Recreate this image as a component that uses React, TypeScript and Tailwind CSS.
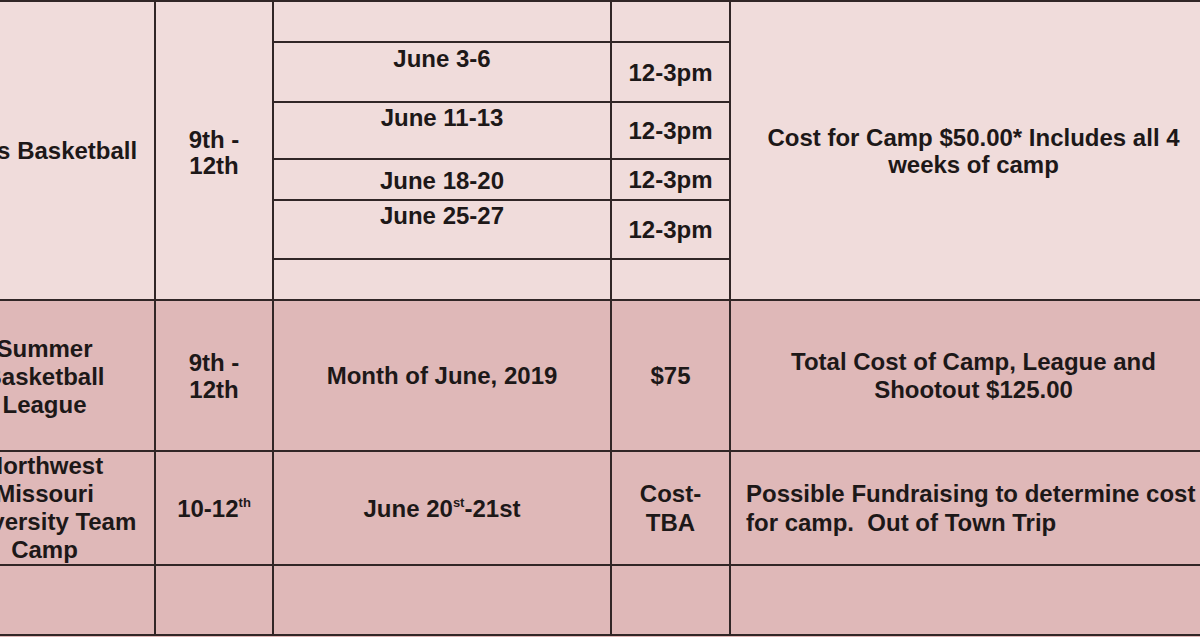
import React from "react";

const B = "border-[#312626]";

function Sub({
  h,
  date,
  time,
  pt,
  last,
}: {
  h: string;
  date?: React.ReactNode;
  time?: React.ReactNode;
  pt: string;
  last?: boolean;
}) {
  return (
    <div className={`flex ${h} ${last ? "" : "border-b-2"} ${B}`}>
      <div className={`w-[338px] border-r-2 ${B} text-center ${pt}`}>{date}</div>
      <div className="flex-1 flex items-center justify-center text-center">{time}</div>
    </div>
  );
}

export default function App() {
  return (
    <div className="w-[1200px] h-[637px] overflow-hidden bg-[#dfb8b8] font-['Liberation_Sans',Arial,sans-serif] font-bold text-[24px] leading-[27px] text-[#1d1818]">
      <div className={`ml-[-65px] w-[1281px] border-t-2 ${B}`}>
        {/* Row 1 */}
        <div className={`flex h-[299px] border-b-2 ${B} bg-[#f0dcdb]`}>
          <div className={`w-[221px] border-r-2 ${B} flex items-center justify-center text-center`}>
            Boys Basketball
          </div>
          <div className={`w-[118px] border-r-2 ${B} flex items-center justify-center text-center leading-[26px] pt-[4px]`}>
            9th -<br />12th
          </div>
          <div className={`w-[457px] border-r-2 ${B} flex flex-col`}>
            <Sub h="h-[41px]" pt="" />
            <Sub h="h-[60px]" pt="pt-[2px]" date="June 3-6" time="12-3pm" />
            <Sub h="h-[57px]" pt="pt-[1px]" date="June 11-13" time="12-3pm" />
            <Sub h="h-[41px]" pt="pt-[7px]" date="June 18-20" time="12-3pm" />
            <Sub h="h-[59px]" pt="pt-[1px]" date="June 25-27" time="12-3pm" />
            <Sub h="flex-1" pt="" last />
          </div>
          <div className="flex-1 flex items-center justify-center text-center">
            Cost for Camp $50.00* Includes all 4<br />weeks of camp
          </div>
        </div>

        {/* Row 2 */}
        <div className={`flex h-[151px] border-b-2 ${B}`}>
          <div className={`w-[221px] border-r-2 ${B} flex items-center justify-center text-center leading-[28px] pt-[2px]`}>
            Summer<br />Basketball<br />League
          </div>
          <div className={`w-[118px] border-r-2 ${B} flex items-center justify-center text-center`}>
            9th -<br />12th
          </div>
          <div className={`w-[338px] border-r-2 ${B} flex items-center justify-center text-center`}>
            Month of June, 2019
          </div>
          <div className={`w-[119px] border-r-2 ${B} flex items-center justify-center text-center`}>
            $75
          </div>
          <div className="flex-1 flex items-center justify-center text-center leading-[28px]">
            Total Cost of Camp, League and<br />Shootout $125.00
          </div>
        </div>

        {/* Row 3 */}
        <div className={`flex h-[114px] border-b-2 ${B}`}>
          <div className={`w-[221px] border-r-2 ${B} flex items-center justify-center text-center leading-[28px]`}>
            Northwest<br />Missouri<br />University Team<br />Camp
          </div>
          <div className={`w-[118px] border-r-2 ${B} flex items-center justify-center text-center`}>
            <span>
              10-12<sup className="text-[13px] top-[-10px]">th</sup>
            </span>
          </div>
          <div className={`w-[338px] border-r-2 ${B} flex items-center justify-center text-center`}>
            <span>
              June 20<sup className="text-[13px] top-[-10px]">st</sup>-21st
            </span>
          </div>
          <div className={`w-[119px] border-r-2 ${B} flex items-center justify-center text-center leading-[29px]`}>
            Cost-<br />TBA
          </div>
          <div className="flex-1 flex items-center pl-[15px] leading-[29px] whitespace-nowrap">
            <span>
              Possible Fundraising to determine cost
              <br />
              for camp.&nbsp; Out of Town Trip
            </span>
          </div>
        </div>

        {/* Row 4 */}
        <div className={`flex h-[70px] border-b-2 ${B}`}>
          <div className={`w-[221px] border-r-2 ${B}`} />
          <div className={`w-[118px] border-r-2 ${B}`} />
          <div className={`w-[338px] border-r-2 ${B}`} />
          <div className={`w-[119px] border-r-2 ${B}`} />
          <div className="flex-1" />
        </div>
      </div>
    </div>
  );
}
